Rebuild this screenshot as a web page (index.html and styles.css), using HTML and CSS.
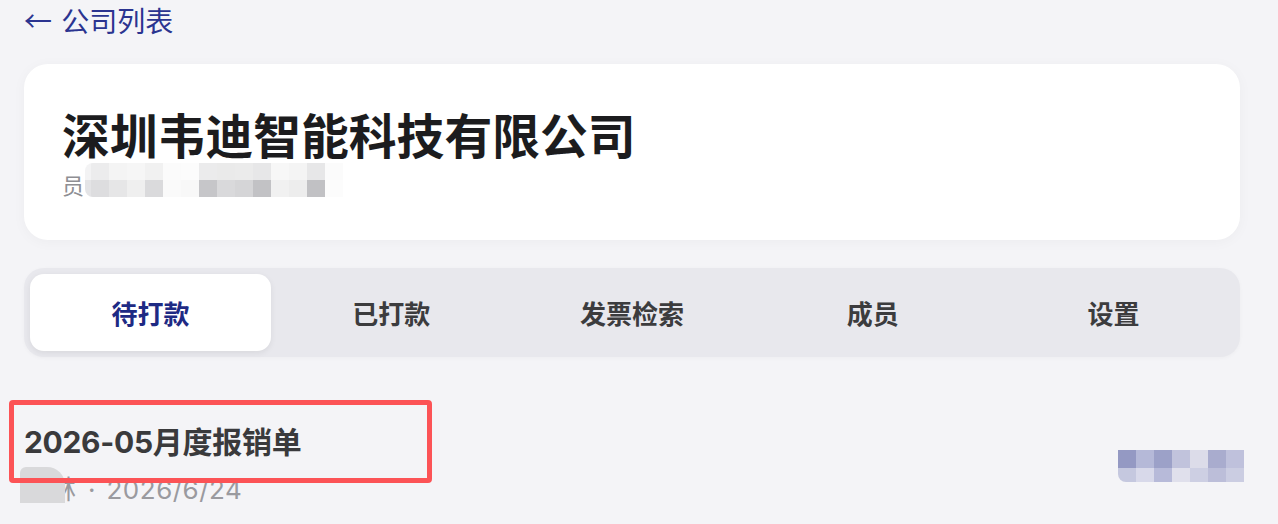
FILE: index.html
```html
<!DOCTYPE html>
<html lang="zh-CN">
<head>
<meta charset="utf-8">
<title>深圳韦迪智能科技有限公司</title>
<link rel="stylesheet" href="styles.css">
</head>
<body>
<main class="page">
  <a class="back" href="#"><span class="arrow">←</span> 公司列表</a>

  <section class="company-card">
    <h1 class="company-name">深圳韦迪智能科技有限公司</h1>
    <div class="company-meta">
      <span class="meta-label">员</span>
      <span class="mosaic mosaic-gray"></span>
    </div>
  </section>

  <nav class="tabs">
    <button class="tab tab-active">待打款</button>
    <button class="tab">已打款</button>
    <button class="tab">发票检索</button>
    <button class="tab">成员</button>
    <button class="tab">设置</button>
  </nav>

  <section class="report">
    <div class="report-main">
      <h2 class="report-title">2026-05月度报销单</h2>
      <div class="report-meta"><span class="blob"></span>陈林<span class="dot">·</span><span class="date">2026/6/24</span></div>
    </div>
    <div class="mosaic mosaic-blue"></div>
    <div class="highlight"></div>
  </section>
</main>
</body>
</html>
```

FILE: styles.css
```css
* { box-sizing: border-box; }

html, body {
  margin: 0;
  background: #f4f4f7;
}

body {
  font-family: "Inter", "Noto Sans CJK SC", sans-serif;
  overflow: hidden;
}

.page {
  padding: 0 38px 0 24px;
  height: 524px;
}

.back {
  display: block;
  height: 40px;
  font-family: "Noto Sans CJK SC", sans-serif;
  font-size: 28px;
  line-height: 40px;
  color: #2b3490;
  text-decoration: none;
}

.arrow {
  font-family: "Noto Sans CJK SC", sans-serif;
  margin-right: 3px;
}

.company-card {
  margin-top: 24px;
  height: 176px;
  padding: 42px 38px 0;
  background: #ffffff;
  border-radius: 24px;
  box-shadow: 0 2px 14px rgba(0, 0, 0, 0.035);
}

.company-name {
  margin: 0;
  font-family: "Noto Sans CJK SC", sans-serif;
  font-size: 47.8px;
  line-height: 56px;
  font-weight: 700;
  color: #1c1c1e;
}

.company-meta {
  display: flex;
  height: 34px;
  margin-top: 1px;
}

.meta-label {
  align-self: flex-end;
  font-family: "Noto Sans CJK SC", sans-serif;
  font-size: 22px;
  line-height: 26px;
  color: #8e8e93;
}

.mosaic { display: block; }

.mosaic-gray {
  width: 258px;
  height: 34px;
  margin-left: 1px;
  border-radius: 8px 0 0 8px;
  background:
    linear-gradient(to right,
      #f3f3f4 0 6px,
      #ececed 6px 24px, #f4f4f4 24px 42px, #f6f6f6 42px 60px, #f1f1f1 60px 78px,
      #fbfbfb 78px 96px, #fcfcfc 96px 114px, #ebebec 114px 132px, #eaeaea 132px 150px,
      #ebebeb 150px 168px, #e7e7e8 168px 186px, #f7f7f7 186px 204px, #f4f4f4 204px 222px,
      #e7e7e8 222px 240px, #fbfbfb 240px 258px) top / 100% 17px no-repeat,
    linear-gradient(to right,
      #e4e4e6 0 6px,
      #dddddf 6px 24px, #e6e6e7 24px 42px, #efefef 42px 60px, #dadadc 60px 78px,
      #fafafa 78px 96px, #f8f8f8 96px 114px, #c6c6c9 114px 132px, #d9d9db 132px 150px,
      #d5d5d7 150px 168px, #c2c2c5 168px 186px, #f1f1f1 186px 204px, #ededed 204px 222px,
      #c1c1c4 222px 240px, #fcfcfc 240px 258px) bottom / 100% 17px no-repeat;
}

.tabs {
  display: grid;
  grid-template-columns: repeat(5, 1fr);
  margin-top: 28px;
  padding: 6px;
  background: #e8e8ed;
  border-radius: 20px;
  box-shadow: 0 1px 4px rgba(0, 0, 0, 0.03);
}

.tab {
  height: 77px;
  border: 0;
  background: transparent;
  border-radius: 14px;
  font-family: "Noto Sans CJK SC", sans-serif;
  font-size: 26px;
  font-weight: 600;
  color: #3c3c3e;
  padding: 0;
}

.tab-active {
  background: #ffffff;
  color: #1e2a84;
  box-shadow: 0 2px 6px rgba(0, 0, 0, 0.07);
}

.report {
  position: relative;
  display: flex;
  justify-content: space-between;
  padding-top: 65px;
}

.report-title {
  margin: 0;
  font-size: 30px;
  line-height: 40px;
  font-weight: 700;
  color: #3a3a3c;
  letter-spacing: -0.3px;
}

.report-meta {
  position: relative;
  margin-top: 11px;
  font-size: 26px;
  line-height: 34px;
  color: #9a9a9f;
}

.dot {
  margin: 0 11px 0 12px;
}

.date {
  letter-spacing: 0.5px;
}

.blob {
  position: absolute;
  left: -4px;
  top: -6px;
  width: 45px;
  height: 36px;
  background: #d9d9db;
  border-radius: 6px 18px 0 0;
}

.mosaic-blue {
  width: 126px;
  height: 32px;
  margin-top: 28px;
  margin-right: -4px;
  border-radius: 0 0 0 8px;
  background:
    linear-gradient(to right,
      #9499c3 0 18px, #b5b9d8 18px 36px, #9ca1c8 36px 54px, #c1c3dc 54px 72px,
      #dcdce9 72px 90px, #a9acce 90px 108px, #bfc1dc 108px 126px) top / 100% 18px no-repeat,
    linear-gradient(to right,
      #c5c8df 0 18px, #d8d9ea 18px 36px, #b7bad9 36px 54px, #e0e0ec 54px 72px,
      #cdcfe3 72px 90px, #bcbed9 90px 108px, #cbcde2 108px 126px) bottom / 100% 14px no-repeat;
}

.highlight {
  position: absolute;
  left: -15px;
  top: 43px;
  width: 423px;
  height: 83px;
  border: 5px solid #fc5356;
  border-radius: 4px;
}
```
